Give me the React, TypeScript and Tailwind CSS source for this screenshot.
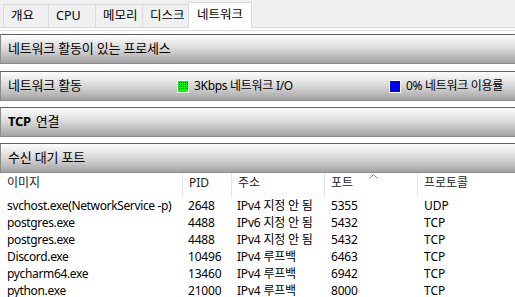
const rows = [
  { image: 'svchost.exe(NetworkService -p)', pid: '2648', addr: 'IPv4 지정 안 됨', port: '5355', proto: 'UDP' },
  { image: 'postgres.exe', pid: '4488', addr: 'IPv6 지정 안 됨', port: '5432', proto: 'TCP' },
  { image: 'postgres.exe', pid: '4488', addr: 'IPv4 지정 안 됨', port: '5432', proto: 'TCP' },
  { image: 'Discord.exe', pid: '10496', addr: 'IPv4 루프백', port: '6463', proto: 'TCP' },
  { image: 'pycharm64.exe', pid: '13460', addr: 'IPv4 루프백', port: '6942', proto: 'TCP' },
  { image: 'python.exe', pid: '21000', addr: 'IPv4 루프백', port: '8000', proto: 'TCP' },
];

const tabs = [
  { label: '개요', w: 'w-[46px]' },
  { label: 'CPU', w: 'w-[48px]' },
  { label: '메모리', w: 'w-[48px]' },
  { label: '디스크', w: 'w-[47px]' },
];

const SectionHeader = ({ children, className = '' }: { children: React.ReactNode; className?: string }) => (
  <div
    className={`h-[30px] flex items-center pl-[7px] border-t border-l border-b border-t-[#5f5f5f] border-l-[#8a8a8a] border-b-[#8a8a8a] bg-linear-to-b from-[#fdfdfd] via-[#d8d8d8] to-[#a3a3a3] text-[13px] tracking-[-0.2px] text-black ${className}`}
  >
    {children}
  </div>
);

const GridSquare = ({ id, color, fill }: { id: string; color: string; fill?: boolean }) => (
  <svg width="12" height="13" viewBox="0 0 12 13" className="shrink-0">
    <defs>
      <pattern id={id} width="2" height="2" patternUnits="userSpaceOnUse">
        <rect width="2" height="2" fill={color} />
        <rect width="1" height="1" fill="#000" />
      </pattern>
    </defs>
    <rect x="0" y="0" width="12" height="13" fill="#fff" />
    <rect x="1" y="1" width="10" height="11" fill={`url(#${id})`} />
    {fill && <rect x="1" y="9" width="10" height="3" fill={color} />}
  </svg>
);

export default function App() {
  return (
    <div className="w-[515px] h-[297px] overflow-hidden bg-white font-['Noto_Sans','Noto_Sans_CJK_KR',sans-serif] text-[12px] text-black">
      {/* Tabs */}
      <div className="h-[28px] bg-[#f0f0f0] border-b border-[#d9d9d9] flex items-end pl-[3px]">
        {tabs.map((t) => (
          <div
            key={t.label}
            className={`${t.w} h-[23px] border border-b-0 border-[#d9d9d9] -ml-px first:ml-0 flex items-center pl-[7px] text-[12.5px] leading-none`}
          >
            {t.label}
          </div>
        ))}
        <div className="w-[64px] h-[26px] -ml-px -mb-px bg-white border border-b-0 border-[#d9d9d9] flex items-center pl-[8px] text-[12.5px] leading-none relative z-10">
          네트워크
        </div>
      </div>

      <div className="h-[6px] flex flex-col">
        <div className="h-[2px]" />
        <div className="h-px bg-[#dcdcdc]" />
      </div>

      <SectionHeader>네트워크 활동이 있는 프로세스</SectionHeader>

      <SectionHeader className="mt-[7px]">
        <span className="w-[169px]">네트워크 활동</span>
        <GridSquare id="dotsGreen" color="#00ff00" fill />
        <span className="ml-[5px] text-[12px] tracking-[-0.3px] w-[195px]">3Kbps 네트워크 I/O</span>
        <GridSquare id="dotsBlue" color="#0000ff" />
        <span className="ml-[5px] text-[12px] tracking-[-0.3px]">0% 네트워크 이용률</span>
      </SectionHeader>

      <SectionHeader className="mt-[6px]">
        <span className="font-bold tracking-[-0.3px]">TCP</span>
        <span className="ml-[5px]">연결</span>
      </SectionHeader>

      <SectionHeader className="mt-[6px]">수신 대기 포트</SectionHeader>

      {/* Table */}
      <div className="grid grid-cols-[183px_49px_93px_93px_1fr]">
        {['이미지', 'PID', '주소', '포트', '프로토콜'].map((h, i) => (
          <div
            key={h}
            className={`h-[24px] leading-[20px] pl-[6px] text-[#222] relative ${i < 4 ? 'border-r border-[#e5e5e5]' : ''} ${i === 0 ? 'pl-[7px]' : ''}`}
          >
            {h}
            {i === 3 && (
              <svg width="9" height="5" viewBox="0 0 9 5" className="absolute left-[44px] top-[1px]">
                <polyline points="0.5,4.5 4.5,0.5 8.5,4.5" fill="none" stroke="#8a8a8a" strokeWidth="1" />
              </svg>
            )}
          </div>
        ))}
        {rows.map((r, idx) => (
          <div key={idx} className="contents">
            <div className="h-[17px] leading-[17px] pl-[7px] whitespace-nowrap tracking-[-0.35px]">{r.image}</div>
            <div className="h-[17px] leading-[17px] pl-[5px] tracking-[-0.2px]">{r.pid}</div>
            <div className="h-[17px] leading-[17px] pl-[5px] whitespace-nowrap tracking-[-0.2px]">{r.addr}</div>
            <div className="h-[17px] leading-[17px] pl-[6px] tracking-[-0.2px]">{r.port}</div>
            <div className="h-[17px] leading-[17px] pl-[6px]">{r.proto}</div>
          </div>
        ))}
      </div>
    </div>
  );
}
